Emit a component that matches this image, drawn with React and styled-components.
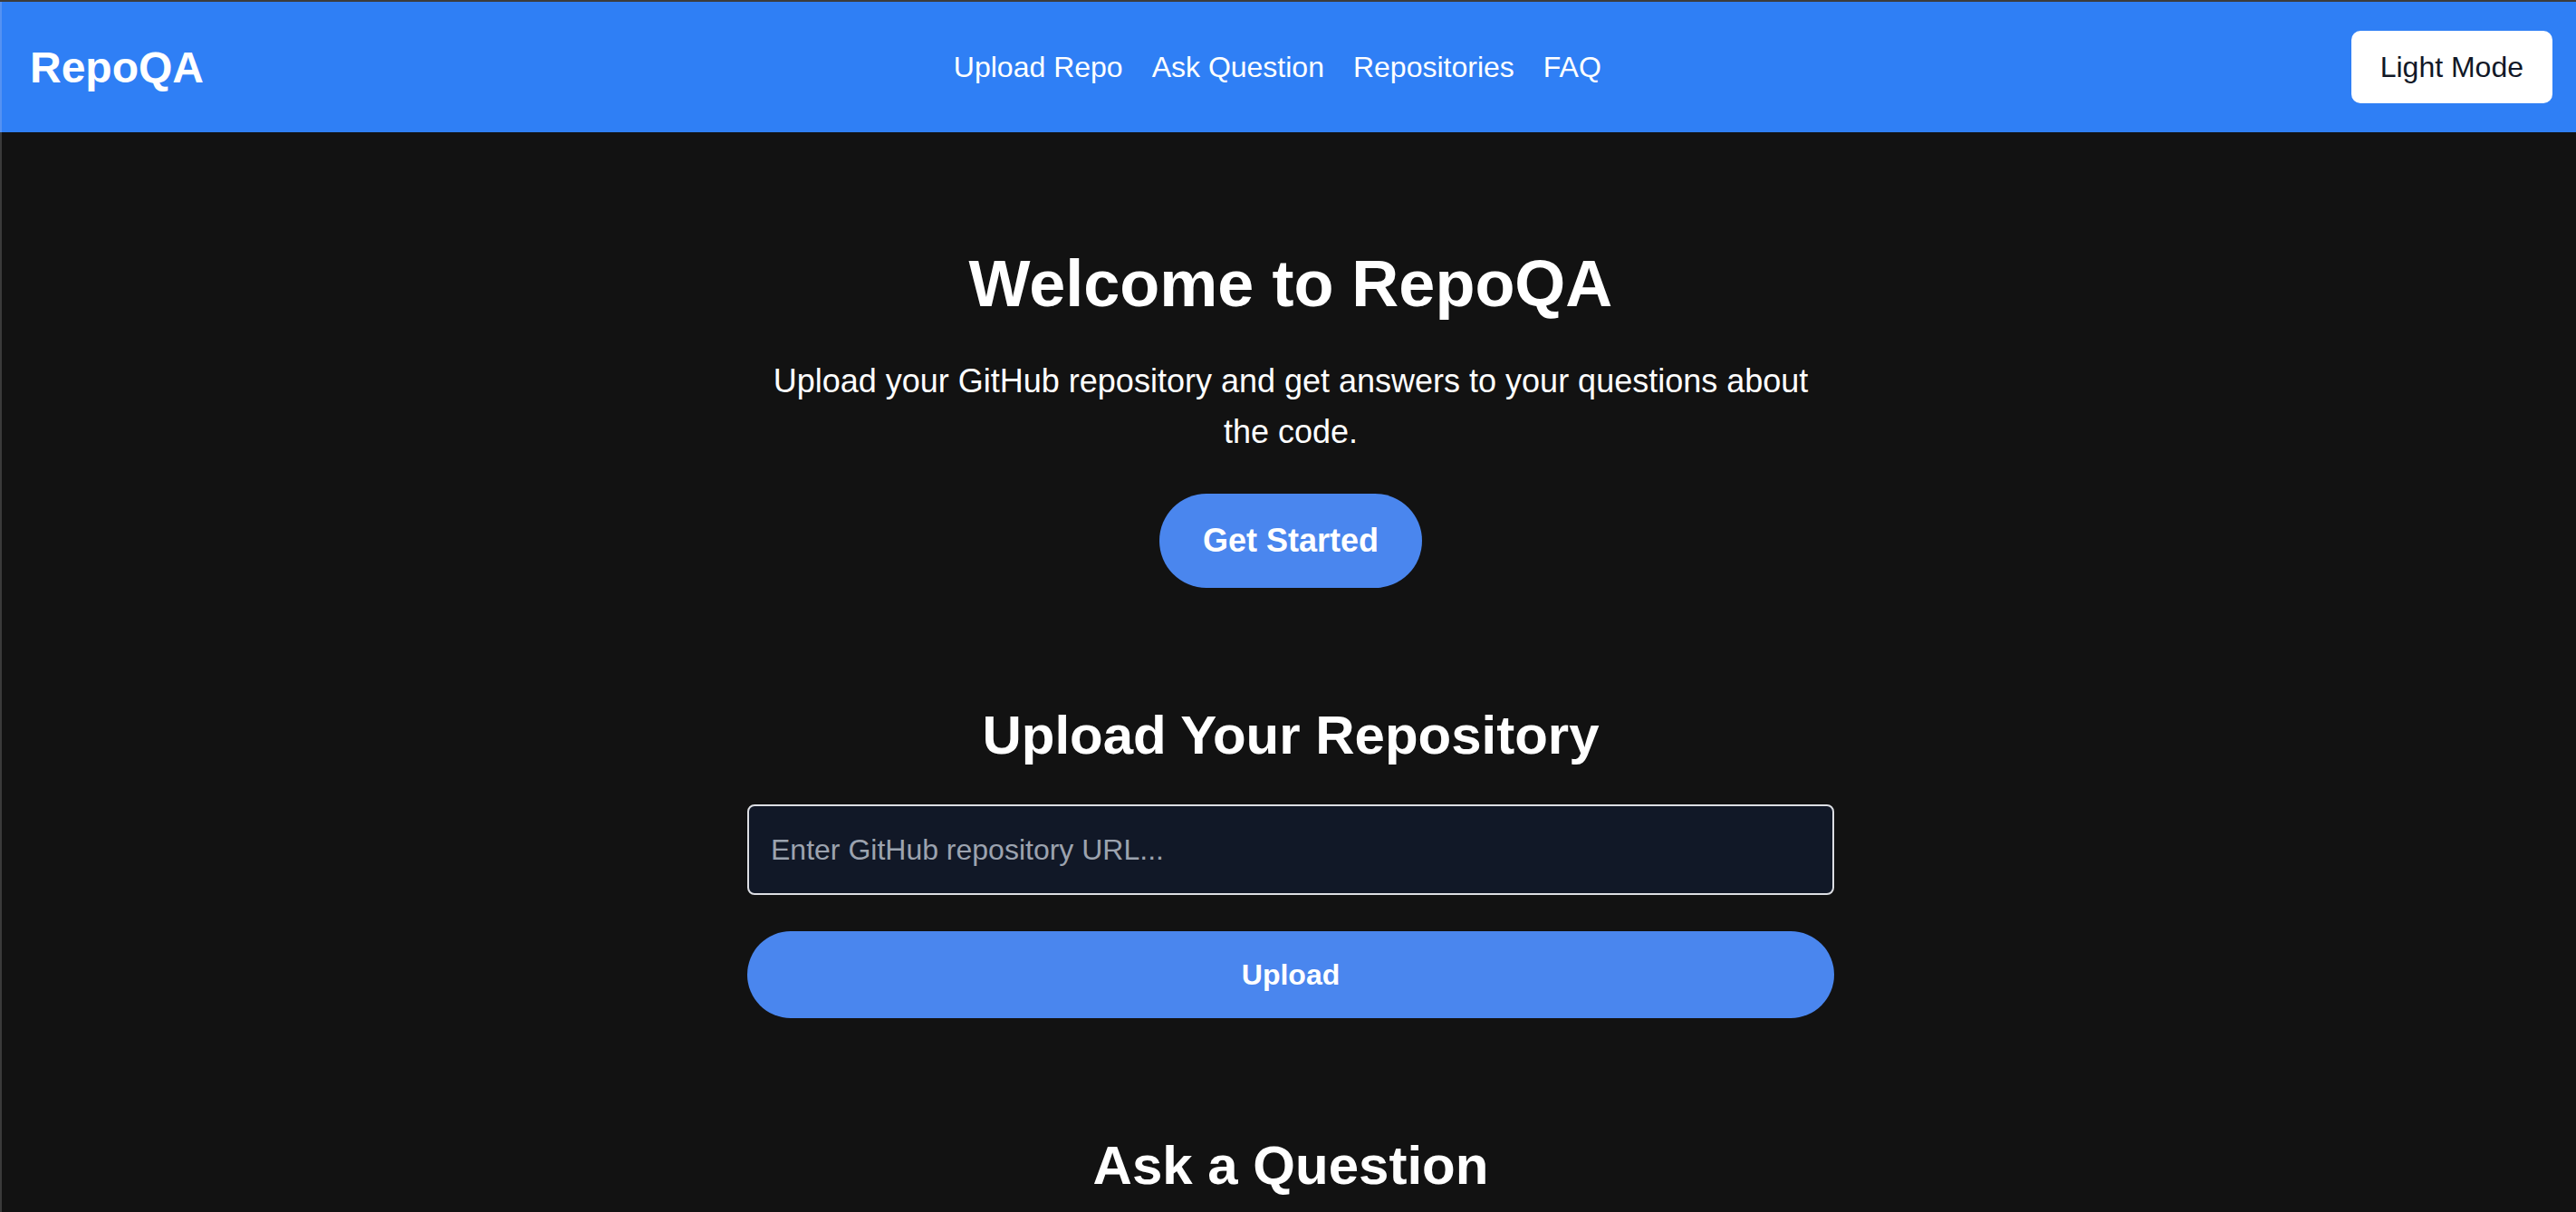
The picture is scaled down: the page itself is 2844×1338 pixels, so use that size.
import React from 'react';
import styled, { createGlobalStyle } from 'styled-components';

const GlobalStyle = createGlobalStyle`
	html, body {
		margin: 0;
		padding: 0;
		background: #121212;
	}
	body {
		font-family: 'Liberation Sans', Arial, sans-serif;
		color: #ffffff;
	}
	* {
		box-sizing: border-box;
	}
`;

const Page = styled.div`
	min-height: 100vh;
	background: #121212;
	border-top: 2px solid #3c3c3c;
	box-shadow: inset 2px 0 0 #3a3a3a;
`;

const Header = styled.header`
	height: 144px;
	padding: 0 26px 0 33px;
	background: #2f7ff5;
	box-shadow: inset 2px 0 0 #5592f2;
	display: flex;
	align-items: center;
	justify-content: space-between;
`;

const Logo = styled.div`
	font-size: 48px;
	font-weight: 700;
	color: #ffffff;
`;

const Nav = styled.nav`
	display: flex;
	gap: 32px;
`;

const NavLink = styled.a`
	font-size: 32px;
	line-height: 48px;
	color: #ffffff;
	text-decoration: none;
	cursor: pointer;
`;

const ModeButton = styled.button`
	font-family: inherit;
	font-size: 32px;
	line-height: 48px;
	padding: 16px 32px;
	background: #ffffff;
	color: #111827;
	border: none;
	border-radius: 10px;
	cursor: pointer;
`;

const Main = styled.main`
	display: flex;
	flex-direction: column;
	align-items: center;
	gap: 127px;
	padding: 127px 0 127px 6px;
`;

const Section = styled.section`
	width: 1200px;
	display: flex;
	flex-direction: column;
	align-items: center;
	text-align: center;
`;

const Title = styled.h1`
	margin: 0 0 40px;
	font-size: 72px;
	line-height: 80px;
	font-weight: 700;
`;

const Subtitle = styled.p`
	margin: 0 0 40px;
	max-width: 1180px;
	font-size: 36px;
	line-height: 56px;
`;

const Heading = styled.h2`
	margin: 0 0 40px;
	font-size: 60px;
	line-height: 72px;
	font-weight: 700;
`;

const PillButton = styled.button`
	font-family: inherit;
	font-weight: 700;
	font-size: ${(p) => (p.$big ? '36px' : '32px')};
	line-height: ${(p) => (p.$big ? '56px' : '48px')};
	padding: 24px 48px;
	width: ${(p) => (p.$full ? '100%' : 'auto')};
	background: #4a86ee;
	color: #ffffff;
	border: none;
	border-radius: 999px;
	cursor: pointer;
`;

const Input = styled.input`
	width: 100%;
	margin-bottom: 40px;
	padding: 24px;
	font-family: inherit;
	font-size: 32px;
	line-height: 48px;
	color: #ffffff;
	background: #111827;
	border: 2px solid #dcdee3;
	border-radius: 8px;
	outline: none;

	&::placeholder {
		color: #9ca3af;
	}
`;

const App = () => {
	return (
		<Page>
			<GlobalStyle />
			<Header>
				<Logo>RepoQA</Logo>
				<Nav>
					<NavLink>Upload Repo</NavLink>
					<NavLink>Ask Question</NavLink>
					<NavLink>Repositories</NavLink>
					<NavLink>FAQ</NavLink>
				</Nav>
				<ModeButton>Light Mode</ModeButton>
			</Header>
			<Main>
				<Section>
					<Title>Welcome to RepoQA</Title>
					<Subtitle>
						Upload your GitHub repository and get answers to your questions about the code.
					</Subtitle>
					<PillButton $big>Get Started</PillButton>
				</Section>
				<Section>
					<Heading>Upload Your Repository</Heading>
					<Input placeholder="Enter GitHub repository URL..." />
					<PillButton $full>Upload</PillButton>
				</Section>
				<Section>
					<Heading>Ask a Question</Heading>
					<Input placeholder="Type your question..." />
					<PillButton $full>Ask</PillButton>
				</Section>
			</Main>
		</Page>
	);
};

export default App;
